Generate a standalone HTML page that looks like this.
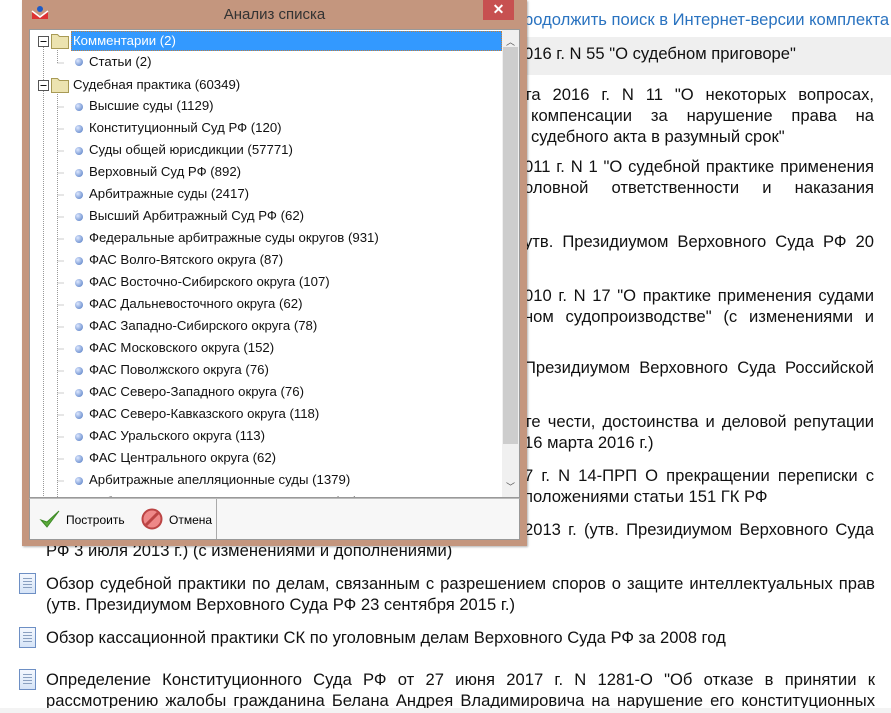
<!DOCTYPE html>
<html><head><meta charset="utf-8"><style>
*{margin:0;padding:0;box-sizing:border-box}
body{width:891px;height:713px;overflow:hidden;background:#fff;position:relative;font-family:"Liberation Sans",Arial,sans-serif}
.bg{position:absolute;font-size:16.6px;color:#111;white-space:nowrap;line-height:22px}
.j{text-align:justify;text-align-last:justify;white-space:normal;height:22px;overflow:hidden}
.doc{position:absolute;left:19px;width:17px;height:21px;border:1px solid #6d8fc4;background:linear-gradient(#f4f8fe,#d6e4f7)}
.doc:after{content:"";position:absolute;left:3px;top:4px;width:9px;height:11px;background:repeating-linear-gradient(#8aa0c0 0 1px,transparent 1px 3px)}
#dlg{position:absolute;left:22px;top:0;width:505px;height:546px;background:#c4967e;box-shadow:1px 1px 2px rgba(0,0,0,.3)}
#title{position:absolute;left:0;top:6px;width:505px;text-align:center;font-size:15px;color:#333}
#close{position:absolute;left:461px;top:0;width:31px;height:20px;background:#c75050;color:#fff;font-size:14px;text-align:center;line-height:19px;font-weight:bold}
#tree{position:absolute;left:7px;top:29px;width:491px;height:469px;background:#fff;border:1px solid #999;overflow:hidden}
.row{position:absolute;font-size:13.2px;color:#111;line-height:18px;white-space:nowrap}
.dot{position:absolute;width:8px;height:8px;border-radius:50%;background:radial-gradient(circle at 35% 35%,#dde8ff,#4a74c0)}
#sb{position:absolute;right:0;top:0;width:17px;height:467px;background:#f0f0f0}
#thumb{position:absolute;left:1px;top:17px;width:15px;height:397px;background:#cdcdcd}
#foot{position:absolute;left:7px;top:498px;width:491px;height:42px;background:#f7f7f7;border:1px solid #999;border-top:1px solid #bbb}
</style></head><body>

<div class="bg" style="left:524px;top:9px;color:#2a73c0">родолжить поиск в Интернет-версии комплекта</div>
<div style="position:absolute;left:520px;top:37px;width:371px;height:38px;background:#efefef"></div>
<div class="bg" style="left:524px;top:43px">016 г. N 55 "О судебном приговоре"</div>
<div class="bg j" style="left:524px;top:84px;width:350px">та 2016 г. N 11 "О некоторых вопросах,</div>
<div class="bg j" style="left:531px;top:105px;width:343px">компенсации за нарушение права на</div>
<div class="bg" style="left:531px;top:126px">судебного акта в разумный срок"</div>
<div class="bg j" style="left:524px;top:156px;width:350px">011 г. N 1 "О судебной практике применения</div>
<div class="bg j" style="left:524px;top:177px;width:350px">оловной ответственности и наказания</div>
<div class="bg j" style="left:524px;top:231px;width:350px">утв. Президиумом Верховного Суда РФ 20</div>
<div class="bg j" style="left:524px;top:285px;width:350px">010 г. N 17 "О практике применения судами</div>
<div class="bg j" style="left:524px;top:306px;width:350px">ном судопроизводстве" (с изменениями и</div>
<div class="bg j" style="left:524px;top:357px;width:350px">Президиумом Верховного Суда Российской</div>
<div class="bg j" style="left:524px;top:411px;width:350px">те чести, достоинства и деловой репутации</div>
<div class="bg" style="left:524px;top:432px">16 марта 2016 г.)</div>
<div class="bg j" style="left:524px;top:465px;width:350px">7 г. N 14-ПРП О прекращении переписки с</div>
<div class="bg" style="left:524px;top:486px">положениями статьи 151 ГК РФ</div>
<div class="bg j" style="left:524px;top:519px;width:350px">2013 г. (утв. Президиумом Верховного Суда</div>
<div class="bg" style="left:46px;top:540px">РФ 3 июля 2013 г.) (с изменениями и дополнениями)</div>
<div class="doc" style="top:573px"></div>
<div class="bg j" style="left:46px;top:573px;width:829px">Обзор судебной практики по делам, связанным с разрешением споров о защите интеллектуальных прав</div>
<div class="bg" style="left:46px;top:594px">(утв. Президиумом Верховного Суда РФ 23 сентября 2015 г.)</div>
<div class="doc" style="top:627px"></div>
<div class="bg" style="left:46px;top:627px">Обзор кассационной практики СК по уголовным делам Верховного Суда РФ за 2008 год</div>
<div class="doc" style="top:669px"></div>
<div class="bg j" style="left:46px;top:669px;width:829px">Определение Конституционного Суда РФ от 27 июня 2017 г. N 1281-О "Об отказе в принятии к</div>
<div class="bg j" style="left:46px;top:690px;width:829px">рассмотрению жалобы гражданина Белана Андрея Владимировича на нарушение его конституционных</div>
<div style="position:absolute;left:0;top:708px;width:891px;height:5px;background:#f3f3f3"></div>

<div id="dlg">
 <svg style="position:absolute;left:9px;top:5px" width="18" height="16"><path d="M1 6 L9 12 L17 6 L17 14 L1 14Z" fill="#d33"/><path d="M1 6 L9 12 L17 6" fill="none" stroke="#fff" stroke-width="1.5"/><circle cx="9" cy="4" r="3" fill="#1e5bc6"/></svg>
 <div id="title">Анализ списка</div>
 <div id="close">✕</div>
 <div id="tree">
  <svg style="position:absolute;left:0;top:0" width="60" height="470">
   <g stroke="#999" stroke-dasharray="1,1" fill="none">
    <path d="M13.5 17V50"/>
    <path d="M13.5 61V470"/>
    <path d="M27.5 18V33M27.5 33H34"/>
    <path d="M27.5 62V470"/>
    <path d="M27.5 77H34M27.5 99H34M27.5 121H34M27.5 143H34M27.5 165H34M27.5 187H34M27.5 209H34M27.5 231H34M27.5 253H34M27.5 275H34M27.5 297H34M27.5 319H34M27.5 341H34M27.5 363H34M27.5 385H34M27.5 407H34M27.5 429H34M27.5 451H34"/>
   </g>
   <g fill="#fff" stroke="#555"><rect x="8.5" y="6.5" width="10" height="10"/><rect x="8.5" y="50.5" width="10" height="10"/></g>
   <path d="M10.5 11.5H16.5M10.5 55.5H16.5" stroke="#111"/>
   <g fill="#ece3b0" stroke="#a89a55"><path d="M21.5 4.5h6l2 2h9v12h-17z"/><path d="M21.5 48.5h6l2 2h9v12h-17z"/></g>
  </svg>
  <div style="position:absolute;left:41px;top:1px;width:431px;height:20px;background:#3399ff;border:1px dotted #c08040"></div>
  <div class="row" style="left:43px;top:2px;color:#fff">Комментарии (2)</div>
  <div class="dot" style="left:45px;top:28px"></div><div class="row" style="left:59px;top:23px">Статьи (2)</div>
  <div class="row" style="left:43px;top:46px">Судебная практика (60349)</div>
  <div id="items"></div>
  <div id="sb"><div style="position:absolute;left:4px;top:5px;font-size:9px;color:#555">︿</div><div id="thumb"></div><div style="position:absolute;left:4px;bottom:4px;font-size:9px;color:#555">﹀</div></div>
 </div>
 <div id="foot">
  <svg style="position:absolute;left:9px;top:10px" width="22" height="20"><path d="M2 11 L8 18 L20 2 L8 13Z" fill="#5cab3c" stroke="#3d8a26"/></svg>
  <div style="position:absolute;left:36px;top:14px;font-size:12px">Построить</div>
  <svg style="position:absolute;left:111px;top:9px" width="22" height="22"><circle cx="11" cy="11" r="9.5" fill="#e88" stroke="#b44" stroke-width="2"/><path d="M5 17 L17 5" stroke="#b44" stroke-width="3"/></svg>
  <div style="position:absolute;left:139px;top:14px;font-size:12px">Отмена</div>
  <div style="position:absolute;left:186px;top:0;width:1px;height:40px;background:#aaa"></div>
 </div>
</div>
<script>
var t=["Высшие суды (1129)","Конституционный Суд РФ (120)","Суды общей юрисдикции (57771)","Верховный Суд РФ (892)","Арбитражные суды (2417)","Высший Арбитражный Суд РФ (62)","Федеральные арбитражные суды округов (931)","ФАС Волго-Вятского округа (87)","ФАС Восточно-Сибирского округа (107)","ФАС Дальневосточного округа (62)","ФАС Западно-Сибирского округа (78)","ФАС Московского округа (152)","ФАС Поволжского округа (76)","ФАС Северо-Западного округа (76)","ФАС Северо-Кавказского округа (118)","ФАС Уральского округа (113)","ФАС Центрального округа (62)","Арбитражные апелляционные суды (1379)","Арбитражные апелляционные суды РФ (12)"];
var h="";t.forEach(function(s,i){var y=67+i*22;h+='<div class="dot" style="left:45px;top:'+(y+6)+'px"></div><div class="row" style="left:59px;top:'+y+'px">'+s+'</div>';});
document.getElementById("items").innerHTML=h;
</script>
</body></html>
